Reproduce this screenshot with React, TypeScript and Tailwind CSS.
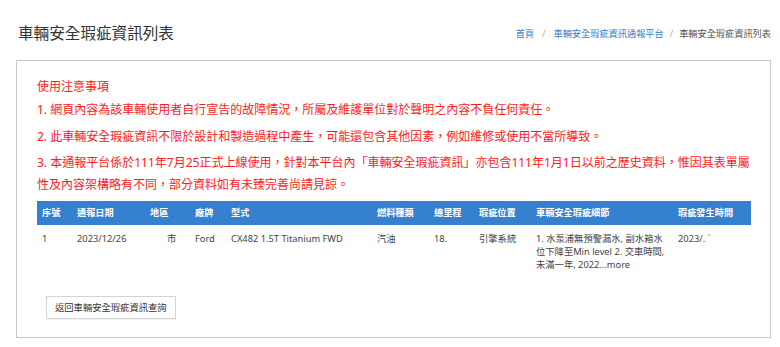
const headers = ['序號', '通報日期', '地區', '廠牌', '型式', '燃料種類', '總里程', '瑕疵位置', '車輛安全瑕疵細節', '瑕疵發生時間'];

const notes = [
  '1. 網頁內容為該車輛使用者自行宣告的故障情況，所屬及維護單位對於聲明之內容不負任何責任。',
  '2. 此車輛安全瑕疵資訊不限於設計和製造過程中產生，可能還包含其他因素，例如維修或使用不當所導致。',
  '3. 本通報平台係於111年7月25正式上線使用，針對本平台內「車輛安全瑕疵資訊」亦包含111年1月1日以前之歷史資料，惟因其表單屬性及內容架構略有不同，部分資料如有未臻完善尚請見諒。',
];

export default function App() {
  return (
    <div className="min-h-screen bg-white text-[#333] font-['Noto_Sans','Noto_Sans_CJK_TC',sans-serif]">
      <div className="flex items-center justify-between h-[60px] pt-[5px] pl-[18px] pr-[9px]">
        <h1 className="text-[15.6px] leading-[20px] text-[#333]">車輛安全瑕疵資訊列表</h1>
        <nav className="flex items-center mt-[2px] text-[9.2px] leading-[12px]">
          <a href="#" className="text-[#3a7cc4]">首頁</a>
          <span className="text-[#aaa] px-[8px]">/</span>
          <a href="#" className="text-[#3a7cc4]">車輛安全瑕疵資訊通報平台</a>
          <span className="text-[#aaa] px-[6px]">/</span>
          <span className="text-[#555]">車輛安全瑕疵資訊列表</span>
        </nav>
      </div>

      <div className="ml-[16px] mr-[9px] border border-[#c8c8c8] pt-[15px] px-[20px] pb-[18px]">
        <div className="text-[#ff1a1a] text-[12px] leading-[22px]">
          <div>使用注意事項</div>
          <p className="mt-[1px]">{notes[0]}</p>
          <p className="mt-[5px]">{notes[1]}</p>
          <p className="mt-[4px]">{notes[2]}</p>
        </div>

        <table className="mt-[5px] w-full table-fixed border-collapse">
          <colgroup>
            <col className="w-[35px]" />
            <col className="w-[73px]" />
            <col className="w-[45px]" />
            <col className="w-[36px]" />
            <col className="w-[146px]" />
            <col className="w-[57px]" />
            <col className="w-[45px]" />
            <col className="w-[57px]" />
            <col className="w-[142px]" />
            <col className="w-[78px]" />
          </colgroup>
          <thead>
            <tr className="bg-[#3580cf] text-white h-[24px]">
              {headers.map((h) => (
                <th key={h} className="px-[5px] text-left text-[9.2px] font-bold whitespace-nowrap">
                  {h}
                </th>
              ))}
            </tr>
          </thead>
          <tbody className="text-[9.3px] leading-[13px] text-[#444] align-top">
            <tr>
              <td className="px-[5px] pt-[7px]">1</td>
              <td className="px-[5px] pt-[7px]">2023/12/26</td>
              <td className="pl-[22px] pr-[5px] pt-[7px]">市</td>
              <td className="px-[5px] pt-[7px]">Ford</td>
              <td className="px-[5px] pt-[7px] whitespace-nowrap">CX482 1.5T Titanium FWD</td>
              <td className="px-[5px] pt-[7px]">汽油</td>
              <td className="px-[5px] pt-[7px]">18.</td>
              <td className="px-[5px] pt-[7px]">引擎系統</td>
              <td className="px-[5px] pt-[7px]">1. 水泵浦無預警漏水, 副水箱水位下降至Min level 2. 交車時間, 未滿一年, 2022...more</td>
              <td className="px-[5px] pt-[7px]">2023/. `</td>
            </tr>
          </tbody>
        </table>

        <button className="block mt-[25px] ml-[9px] h-[23px] px-[8px] border border-[#d4d4d4] bg-white text-[9.3px] text-[#333] shadow-[0_1px_1px_rgba(0,0,0,0.05)]">
          返回車輛安全瑕疵資訊查詢
        </button>
      </div>
    </div>
  );
}
